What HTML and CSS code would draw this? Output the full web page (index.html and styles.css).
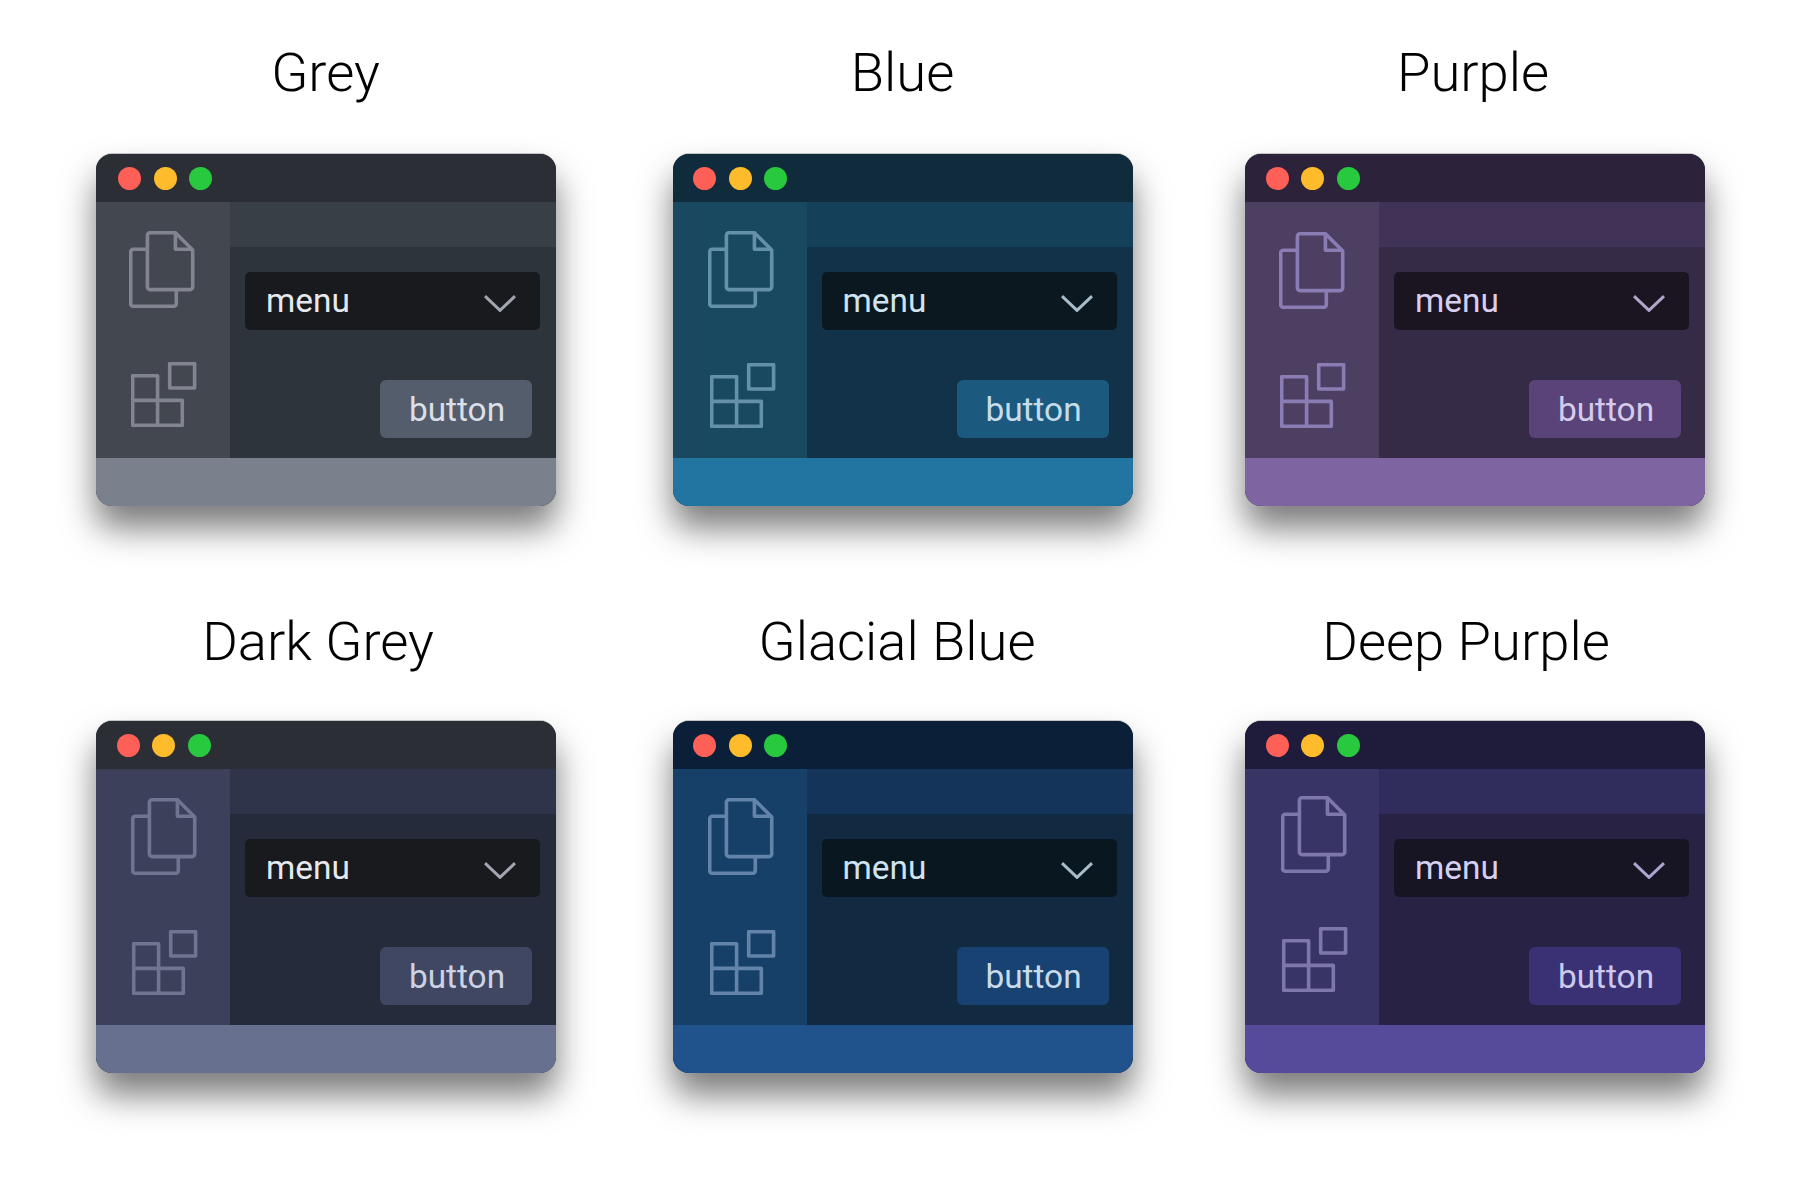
FILE: index.html
```html
<!DOCTYPE html>
<html lang="en">
<head>
<meta charset="utf-8">
<title>Themes</title>
<link rel="stylesheet" href="styles.css">
</head>
<body>
<svg class="defs" width="0" height="0" aria-hidden="true">
  <symbol id="docs" viewBox="0 0 66 77">
    <path d="M21 1.7H46.4L63.7 19V56a2.6 2.6 0 0 1-2.6 2.6H21a2.6 2.6 0 0 1-2.6-2.6V4.3a2.6 2.6 0 0 1 2.6-2.6Z"/>
    <path d="M46.4 1.7V18.3H63.7"/>
    <path d="M18.4 18.3H4.3a2.6 2.6 0 0 0-2.6 2.6V72.7a2.6 2.6 0 0 0 2.6 2.6H44.7a2.6 2.6 0 0 0 2.6-2.6V58.6"/>
  </symbol>
  <symbol id="blocks" viewBox="0 0 66 65">
    <path d="M38.7 1.7H63.6V26H38.7Z"/>
    <path d="M1.7 13.7H26.6V38.4H51.3V63.3H1.7Z"/>
    <path d="M1.7 38.4H26.6V63.3"/>
  </symbol>
</svg>
<main class="gallery">
  <section class="card t-grey">
    <h2 class="name">Grey</h2>
    <div class="win">
      <div class="bar"><i class="dot red"></i><i class="dot amber"></i><i class="dot green"></i></div>
      <div class="mid">
        <div class="side"><svg class="ico docs"><use href="#docs"/></svg><svg class="ico blocks"><use href="#blocks"/></svg></div>
        <div class="main">
          <div class="tabs"></div>
          <div class="content">
            <div class="menu"><span>menu</span><svg class="chev" viewBox="0 0 32 17"><path d="M1 1.2L16 15.4L31 1.2"/></svg></div>
            <div class="btn">button</div>
          </div>
        </div>
      </div>
      <div class="status"></div>
    </div>
  </section>
  <section class="card t-blue">
    <h2 class="name">Blue</h2>
    <div class="win">
      <div class="bar"><i class="dot red"></i><i class="dot amber"></i><i class="dot green"></i></div>
      <div class="mid">
        <div class="side"><svg class="ico docs"><use href="#docs"/></svg><svg class="ico blocks"><use href="#blocks"/></svg></div>
        <div class="main">
          <div class="tabs"></div>
          <div class="content">
            <div class="menu"><span>menu</span><svg class="chev" viewBox="0 0 32 17"><path d="M1 1.2L16 15.4L31 1.2"/></svg></div>
            <div class="btn">button</div>
          </div>
        </div>
      </div>
      <div class="status"></div>
    </div>
  </section>
  <section class="card t-purple">
    <h2 class="name">Purple</h2>
    <div class="win">
      <div class="bar"><i class="dot red"></i><i class="dot amber"></i><i class="dot green"></i></div>
      <div class="mid">
        <div class="side"><svg class="ico docs"><use href="#docs"/></svg><svg class="ico blocks"><use href="#blocks"/></svg></div>
        <div class="main">
          <div class="tabs"></div>
          <div class="content">
            <div class="menu"><span>menu</span><svg class="chev" viewBox="0 0 32 17"><path d="M1 1.2L16 15.4L31 1.2"/></svg></div>
            <div class="btn">button</div>
          </div>
        </div>
      </div>
      <div class="status"></div>
    </div>
  </section>
  <section class="card t-darkgrey">
    <h2 class="name">Dark Grey</h2>
    <div class="win">
      <div class="bar"><i class="dot red"></i><i class="dot amber"></i><i class="dot green"></i></div>
      <div class="mid">
        <div class="side"><svg class="ico docs"><use href="#docs"/></svg><svg class="ico blocks"><use href="#blocks"/></svg></div>
        <div class="main">
          <div class="tabs"></div>
          <div class="content">
            <div class="menu"><span>menu</span><svg class="chev" viewBox="0 0 32 17"><path d="M1 1.2L16 15.4L31 1.2"/></svg></div>
            <div class="btn">button</div>
          </div>
        </div>
      </div>
      <div class="status"></div>
    </div>
  </section>
  <section class="card t-glacial">
    <h2 class="name">Glacial Blue</h2>
    <div class="win">
      <div class="bar"><i class="dot red"></i><i class="dot amber"></i><i class="dot green"></i></div>
      <div class="mid">
        <div class="side"><svg class="ico docs"><use href="#docs"/></svg><svg class="ico blocks"><use href="#blocks"/></svg></div>
        <div class="main">
          <div class="tabs"></div>
          <div class="content">
            <div class="menu"><span>menu</span><svg class="chev" viewBox="0 0 32 17"><path d="M1 1.2L16 15.4L31 1.2"/></svg></div>
            <div class="btn">button</div>
          </div>
        </div>
      </div>
      <div class="status"></div>
    </div>
  </section>
  <section class="card t-deep">
    <h2 class="name">Deep Purple</h2>
    <div class="win">
      <div class="bar"><i class="dot red"></i><i class="dot amber"></i><i class="dot green"></i></div>
      <div class="mid">
        <div class="side"><svg class="ico docs"><use href="#docs"/></svg><svg class="ico blocks"><use href="#blocks"/></svg></div>
        <div class="main">
          <div class="tabs"></div>
          <div class="content">
            <div class="menu"><span>menu</span><svg class="chev" viewBox="0 0 32 17"><path d="M1 1.2L16 15.4L31 1.2"/></svg></div>
            <div class="btn">button</div>
          </div>
        </div>
      </div>
      <div class="status"></div>
    </div>
  </section>
</main>
</body>
</html>
```
FILE: styles.css
```css
* { box-sizing: border-box; }
html, body { margin: 0; height: 100%; background: #fff; }
body { font-family: Roboto, "Liberation Sans", sans-serif; overflow: hidden; }
.defs { position: absolute; }

.gallery {
  display: grid;
  grid-template-columns: 576.5px 572.5px 460px;
  grid-auto-rows: 567px;
  padding: 36px 0 0 96px;
}

.card { width: 460px; }
.name {
  margin: 1px 0 45px;
  height: 72px;
  padding-right: var(--name-shift, 1px);
  font-size: 54.4px;
  line-height: 72px;
  font-weight: 300;
  color: #000;
  text-align: center;
}
.card:nth-child(n+4) .name { margin: 2.5px 0 43.5px; }

.win {
  display: flex;
  flex-direction: column;
  width: 460px;
  height: 352px;
  border-radius: 16px;
  overflow: hidden;
  background: var(--title);
  box-shadow: 0 -1px 0 rgba(0,0,0,.2), 0 22px 34px rgba(0,0,0,.52);
}

.bar {
  flex: 0 0 48px;
  display: flex;
  align-items: center;
  gap: 12.5px;
  padding-left: var(--dots-x, 20.5px);
  background: var(--title);
}
.dot { width: 23px; height: 23px; border-radius: 50%; }
.red { background: #fe5f57; }
.amber { background: #febb2c; }
.green { background: #28c93f; }

.mid { flex: 1; display: flex; min-height: 0; }
.side {
  flex: 0 0 134px;
  display: flex;
  flex-direction: column;
  align-items: flex-start;
  background: var(--side);
  color: var(--icon);
}
.ico { display: block; fill: none; stroke: currentColor; stroke-width: 3.6; stroke-linejoin: round; }
.docs { width: 66px; height: 77px; margin: var(--docs-y, 29px) 0 0 var(--docs-x, 35px); }
.blocks { width: 66px; height: 65px; margin: var(--blocks-gap, 55px) 0 0 var(--blocks-x, 36px); }

.main { flex: 1; display: flex; flex-direction: column; background: var(--main); }
.tabs { flex: 0 0 45px; background: var(--tabs); }
.content { flex: 1; display: flex; flex-direction: column; padding: 25px 16px 0 15px; }

.menu {
  display: flex;
  align-items: center;
  justify-content: space-between;
  height: 58px;
  padding: 0 24px 2px 21px;
  border-radius: 5px;
  background: var(--menu);
  font-size: 33.4px;
  color: var(--text);
}
.chev { width: 32px; height: 17px; margin-top: 7px; fill: none; stroke: var(--chev); stroke-width: 3; }

.btn {
  align-self: flex-end;
  display: flex;
  align-items: center;
  justify-content: center;
  width: 152px;
  height: 58px;
  margin: 50px 8px 0 0;
  padding-left: 2px;
  border-radius: 6px;
  background: var(--btn);
  font-size: 33.4px;
  color: var(--btn-text);
}

.status { flex: 0 0 48px; background: var(--status); }

.t-grey {
  --title:#2b2e35; --side:#424750; --tabs:#393f47; --main:#2e343b; --menu:#191a1e; --btn:#545d6b; --status:#7b808d;
  --icon:#82858f; --text:#e6e8ee; --chev:#a0a5b0; --btn-text:#dbdfe8;
  --dots-x:22.2px; --docs-y:29px; --docs-x:33.3px; --blocks-x:34.7px; --blocks-gap:54px;
}
.t-blue {
  --title:#0f2b3c; --side:#184960; --tabs:#144059; --main:#113248; --menu:#0b1820; --btn:#1b5a7e; --status:#2274a1;
  --icon:#6491a9; --text:#cfe3f0; --chev:#a8bdc9; --btn-text:#c6dcea; --name-shift:0px;
  --docs-y:29px; --docs-x:35.8px; --blocks-x:37px; --blocks-gap:54.5px;
}
.t-purple {
  --title:#2c233b; --side:#4c3f62; --tabs:#413357; --main:#362b47; --menu:#1a1521; --btn:#5a4378; --status:#7e65a1;
  --icon:#8a7db3; --text:#d9cdf0; --chev:#b0a6cc; --btn-text:#d5cbea; --name-shift:4px;
  --docs-y:29.5px; --docs-x:33.7px; --blocks-x:35px; --blocks-gap:54px;
}
.t-darkgrey {
  --title:#2b2e35; --side:#3c405a; --tabs:#30344a; --main:#262b3c; --menu:#191a1e; --btn:#3f4762; --status:#68708f;
  --icon:#6f7590; --text:#e6e8ee; --chev:#a0a5b0; --btn-text:#cdd3e2;
  --docs-y:29px; --docs-x:35px; --blocks-x:36px; --blocks-gap:54.5px; --name-shift:16px;
}
.t-glacial {
  --title:#0b1f38; --side:#174068; --tabs:#14345a; --main:#112a41; --menu:#091820; --btn:#184271; --status:#20538b;
  --icon:#6384a8; --text:#cfe3f0; --chev:#a8bdc9; --btn-text:#c6dcea;
  --docs-y:29px; --docs-x:35.8px; --blocks-x:37px; --blocks-gap:54.5px; --name-shift:11px;
}
.t-deep {
  --title:#1e1b3b; --side:#393466; --tabs:#302c5b; --main:#282345; --menu:#171523; --btn:#3a3175; --status:#564a9a;
  --icon:#7d77ab; --text:#d5d0f2; --chev:#aaa6cf; --btn-text:#cdc8ec;
  --docs-y:26.5px; --docs-x:35.7px; --blocks-x:37.3px; --blocks-gap:54.5px; --name-shift:18px;
}
```
